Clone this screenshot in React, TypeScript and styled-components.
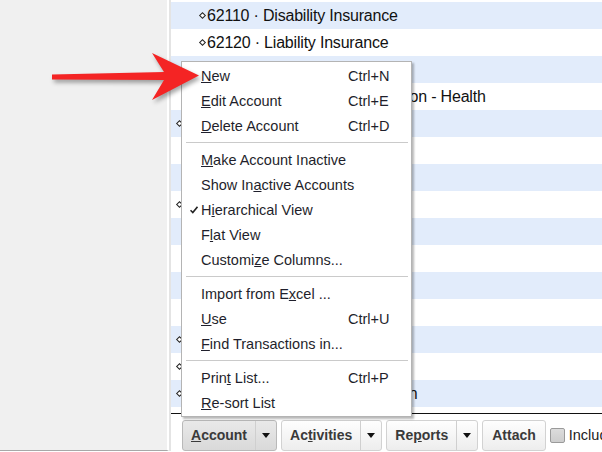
import React from 'react'
import styled, {createGlobalStyle} from 'styled-components'

const GlobalStyle = createGlobalStyle`
  body {
    margin: 0;
    overflow: hidden;
    font-family: "Liberation Sans", Arial, sans-serif;
  }
`

const Screen = styled.div`
  position: relative;
  display: flex;
  width: 602px;
  height: 452px;
  overflow: hidden;
  background: #fff;
`

const SidePanel = styled.div`
  width: 167px;
  height: 450px;
  flex: none;
  background: #f0f0f0;
  border-right: 2px solid #fff;
  border-bottom: 1px solid #a8a8a8;
  box-shadow: 2px 0 0 #e4e4e4;
  margin-right: 2px;
`

const Main = styled.div`
  flex: 1;
  display: flex;
  flex-direction: column;
  min-width: 0;
  overflow: hidden;
`

const AccountList = styled.div`
  height: 411px;
  padding-top: 2px;
  border-bottom: 1px solid #111;
  overflow: hidden;
`

const Row = styled.div<{$alt: boolean; $level: number}>`
  display: flex;
  align-items: center;
  height: 27px;
  padding-left: ${({$level}) => ($level === 1 ? 5 : 28)}px;
  background: ${({$alt}) => ($alt ? '#e2ecfb' : '#fff')};
  font-size: 16px;
  letter-spacing: -0.2px;
  color: #111;
  white-space: nowrap;
`

const Diamond = styled.span`
  display: inline-block;
  width: 3px;
  height: 3px;
  border: 1px solid #222;
  background: #fff;
  transform: rotate(45deg);
  margin: 0 2px 0 1px;
`

const Toolbar = styled.div`
  display: flex;
  align-items: center;
  gap: 4px;
  height: 38px;
  padding: 4px 0 0 11px;
  box-sizing: border-box;
  white-space: nowrap;
`

const Button = styled.div<{$pressed?: boolean}>`
  flex: none;
  display: flex;
  align-items: stretch;
  height: 31px;
  box-sizing: border-box;
  border: 1px solid ${({$pressed}) => ($pressed ? '#b9b9b9' : '#d2d2d2')};
  border-radius: 3px;
  background: ${({$pressed}) =>
    $pressed ? 'linear-gradient(#e9e9e9, #d9d9d9)' : 'linear-gradient(#fefefe, #ededed)'};
  font-size: 14px;
  font-weight: bold;
  color: #3a3a3a;
`

const ButtonLabel = styled.span<{$pad?: number}>`
  display: flex;
  align-items: center;
  padding: 0 ${({$pad}) => $pad ?? 8}px;
`

const ButtonArrow = styled.span`
  display: flex;
  align-items: center;
  justify-content: center;
  width: 20px;
  border-left: 1px solid #cfcfcf;
  &::after {
    content: '';
    border-left: 4px solid transparent;
    border-right: 4px solid transparent;
    border-top: 5px solid #111;
  }
`

const CheckBox = styled.span`
  flex: none;
  width: 15px;
  height: 15px;
  box-sizing: border-box;
  border: 1px solid #9a9a9a;
  border-radius: 2px;
  background: linear-gradient(#dcdcdc, #cdcdcd);
`

const CheckLabel = styled.span`
  flex: none;
  font-size: 14.5px;
  color: #222;
`

const Menu = styled.div`
  position: absolute;
  left: 181px;
  top: 61px;
  width: 231px;
  box-sizing: border-box;
  padding: 1px 0;
  background: #fff;
  border: 1px solid #b4b4b4;
  box-shadow: 2px 2px 2px rgba(0, 0, 0, 0.28);
  font-size: 14.5px;
  color: #1f1f2c;
`

const MenuItem = styled.div`
  position: relative;
  display: grid;
  grid-template-columns: 147px auto;
  align-items: center;
  height: 25px;
  padding-left: 19px;
  white-space: nowrap;
`

const Check = styled.svg`
  position: absolute;
  left: 8px;
  top: 9px;
`

const Separator = styled.div`
  height: 1px;
  margin: 4px 3px 4px 4px;
  background: #cacaca;
`

const Arrow = styled.svg`
  position: absolute;
  left: 0;
  top: 0;
  filter: drop-shadow(2px 3px 2px rgba(0, 0, 0, 0.35));
`

type Account = {level: number; name: string}

const accounts: Account[] = [
  {level: 2, name: '62110 · Disability Insurance'},
  {level: 2, name: '62120 · Liability Insurance'},
  {level: 2, name: '62130 · Work Comp'},
  {level: 2, name: '62140 · Workers Compensation - Health'},
  {level: 1, name: '62400 · Interest'},
  {level: 2, name: '62410 · Loan'},
  {level: 2, name: '62420 · Fees'},
  {level: 1, name: '63000 · Licenses'},
  {level: 2, name: '63100 · Permits'},
  {level: 2, name: '63200 · Filing'},
  {level: 2, name: '63300 · Other'},
  {level: 2, name: '63400 · State'},
  {level: 1, name: '64000 · Office'},
  {level: 1, name: '65000 · Rent'},
  {level: 1, name: '67000 · Travel and Transportation'},
]

type Entry = {label: string; key: number; shortcut?: string; checked?: boolean} | 'sep'

const menu: Entry[] = [
  {label: 'New', key: 0, shortcut: 'Ctrl+N'},
  {label: 'Edit Account', key: 0, shortcut: 'Ctrl+E'},
  {label: 'Delete Account', key: 0, shortcut: 'Ctrl+D'},
  'sep',
  {label: 'Make Account Inactive', key: 0},
  {label: 'Show Inactive Accounts', key: 7},
  {label: 'Hierarchical View', key: 1, checked: true},
  {label: 'Flat View', key: 1},
  {label: 'Customize Columns...', key: 7},
  'sep',
  {label: 'Import from Excel ...', key: 13},
  {label: 'Use', key: 0, shortcut: 'Ctrl+U'},
  {label: 'Find Transactions in...', key: 0},
  'sep',
  {label: 'Print List...', key: 4, shortcut: 'Ctrl+P'},
  {label: 'Re-sort List', key: 0},
]

// underline the access key letter
const Keyed = ({text, at}: {text: string; at: number}) => (
  <span>
    {text.slice(0, at)}
    <u>{text[at]}</u>
    {text.slice(at + 1)}
  </span>
)

const App: React.FC = () => {
  return (
    <Screen>
      <GlobalStyle />
      <SidePanel />
      <Main>
        <AccountList>
          {accounts.map((a, i) => (
            <Row key={a.name} $alt={i % 2 === 0} $level={a.level}>
              <Diamond />
              {a.name}
            </Row>
          ))}
        </AccountList>
        <Toolbar>
          <Button $pressed>
            <ButtonLabel><Keyed text="Account" at={0} /></ButtonLabel>
            <ButtonArrow />
          </Button>
          <Button>
            <ButtonLabel><Keyed text="Activities" at={2} /></ButtonLabel>
            <ButtonArrow />
          </Button>
          <Button>
            <ButtonLabel><Keyed text="Reports" at={2} /></ButtonLabel>
            <ButtonArrow />
          </Button>
          <Button>
            <ButtonLabel $pad={9}>Attach</ButtonLabel>
          </Button>
          <CheckBox />
          <CheckLabel>Include inactive</CheckLabel>
        </Toolbar>
      </Main>

      <Menu>
        {menu.map((m, i) =>
          m === 'sep' ? (
            <Separator key={i} />
          ) : (
            <MenuItem key={i}>
              {m.checked && (
                <Check width="8" height="8" viewBox="0 0 8 8">
                  <path d="M0.5 4.2 L2.8 6.6 L7.5 0.8" fill="none" stroke="#222" strokeWidth="1.6" />
                </Check>
              )}
              <Keyed text={m.label} at={m.key} />
              <span>{m.shortcut}</span>
            </MenuItem>
          )
        )}
      </Menu>

      <Arrow width="210" height="112" viewBox="0 0 210 112">
        <polygon
          points="52,74.5 164,72 152,53 199,75.5 152,100 164,80 52,79.5"
          fill="#f42424"
        />
      </Arrow>
    </Screen>
  )
}

export default App
